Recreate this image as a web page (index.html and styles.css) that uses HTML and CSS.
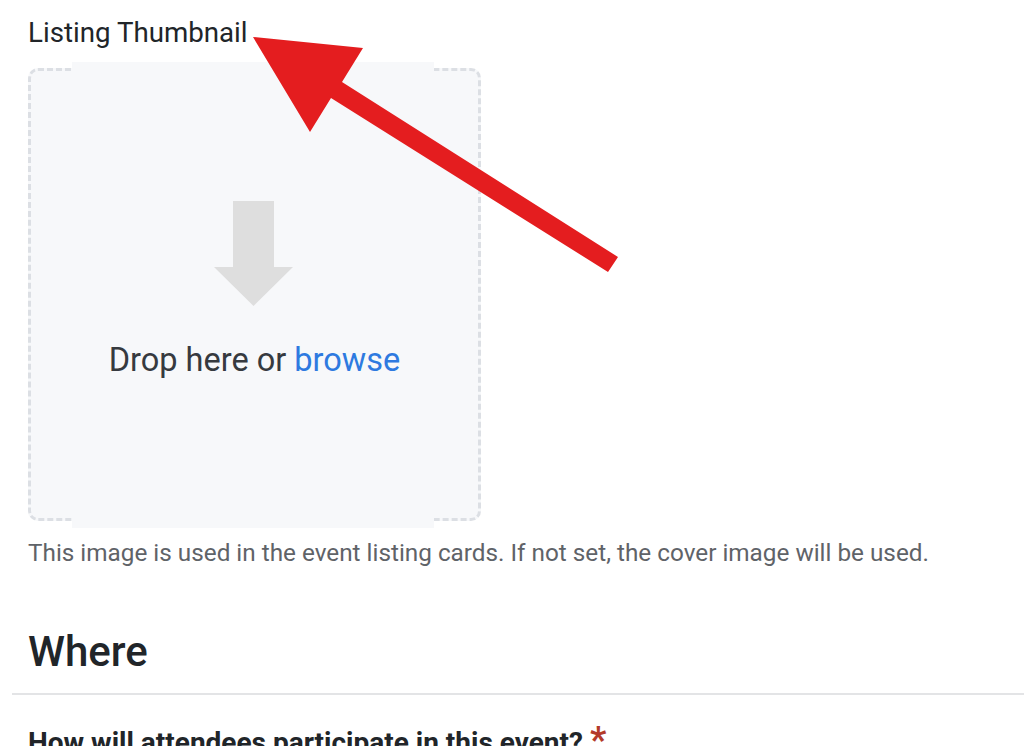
FILE: index.html
```html
<!DOCTYPE html>
<html lang="en">
<head>
<meta charset="utf-8">
<title>Listing Thumbnail</title>
<link rel="stylesheet" href="styles.css">
</head>
<body>
<div class="page">
  <section class="field">
    <label class="field-label">Listing Thumbnail</label>
    <div class="dropzone">
      <div class="dropzone-inner">
        <svg class="drop-icon" width="80" height="106" viewBox="0 0 80 106" aria-hidden="true">
          <polygon points="19,0 60,0 60,66 79,66 39.5,105 0,66 19,66" fill="#dedede"/>
        </svg>
        <p class="drop-text">Drop here or <a class="browse" href="#">browse</a></p>
      </div>
    </div>
    <p class="help">This image is used in the event listing cards. If not set, the cover image will be used.</p>
  </section>
  <h2 class="section-title">Where</h2>
  <hr class="divider">
  <section class="field">
    <p class="question">How will attendees participate in this event? <span class="req">*</span></p>
  </section>
  <svg class="callout" width="1024" height="300" viewBox="0 0 1024 300" aria-hidden="true">
    <polygon points="253,37 363,48 342,82 618,257 608,272 331,98 310,132" fill="#e41d1f"/>
  </svg>
</div>
</body>
</html>
```
FILE: styles.css
```css
html, body {
  margin: 0;
  padding: 0;
  background: #ffffff;
}
body {
  font-family: Roboto, "Liberation Sans", Arial, sans-serif;
  color: #212529;
  overflow: hidden;
}
.page {
  position: relative;
  padding-left: 12px;
  height: 746px;
}
.field {
  padding-left: 16px;
}
.field-label {
  display: block;
  font-size: 27.7px;
  line-height: 32px;
  padding-top: 17px;
  margin-bottom: 19px;
  color: #212529;
}
.dropzone {
  position: relative;
  width: 453px;
  height: 453px;
  box-sizing: border-box;
  border: 3px dashed #dcdfe4;
  border-radius: 10px;
  background: #f7f8fa;
}
.dropzone::before {
  content: "";
  position: absolute;
  left: 41px;
  right: 44px;
  top: -9px;
  bottom: -10px;
  background: #f7f8fa;
}
.dropzone-inner {
  position: relative;
  height: 100%;
  display: flex;
  flex-direction: column;
  align-items: center;
  padding-top: 130px;
  box-sizing: border-box;
}
.drop-icon {
  display: block;
  margin-left: -2px;
}
.drop-text {
  margin: 34px 0 0;
  font-size: 32.5px;
  line-height: 38px;
  color: #363a3f;
}
.browse {
  color: #2e7ae0;
  text-decoration: none;
}
.help {
  margin: 17px 0 0;
  font-size: 24.3px;
  line-height: 30px;
  color: #5f6368;
}
.section-title {
  margin: 59px 0 0 16px;
  font-size: 42px;
  line-height: 50px;
  font-weight: 500;
  color: #212529;
}
.divider {
  margin: 16px 0 0;
  border: 0;
  border-top: 2px solid #e3e4e6;
}
.question {
  margin: 32px 0 0;
  font-size: 28px;
  line-height: 32px;
  font-weight: 700;
  color: #212529;
}
.req {
  color: #b33a2a;
  font-size: 36px;
  line-height: 20px;
}
.callout {
  position: absolute;
  left: 0;
  top: 0;
  pointer-events: none;
}
```
